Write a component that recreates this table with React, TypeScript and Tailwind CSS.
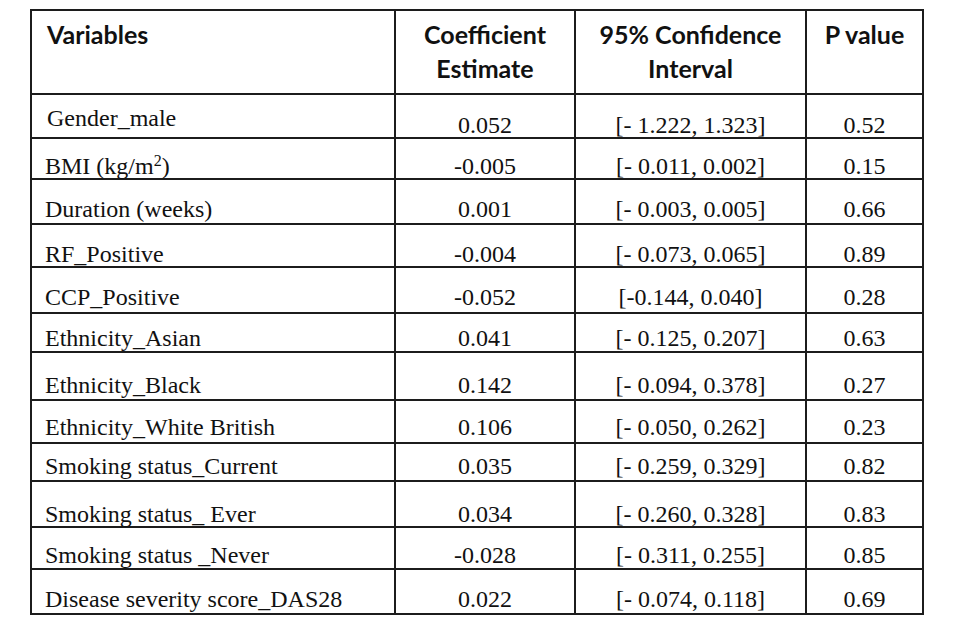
import React from 'react';

type Row = {
    name: React.ReactNode;
    coef: string;
    ci: string;
    p: string;
    h: string;
    pb: string;
    namePb?: string;
};

const rows: Row[] = [
    { name: "Gender_male", coef: "0.052", ci: "[- 1.222, 1.323]", p: "0.52", h: "h-[44px]", pb: "pb-0", namePb: "pb-[7px] pl-[15px]" },
    { name: <>BMI (kg/m<sup className="text-[16px] relative -top-[8px]">2</sup>)</>, coef: "-0.005", ci: "[- 0.011, 0.002]", p: "0.15", h: "h-[41px]", pb: "pb-0" },
    { name: "Duration (weeks)", coef: "0.001", ci: "[- 0.003, 0.005]", p: "0.66", h: "h-[45px]", pb: "pb-[2px]" },
    { name: "RF_Positive", coef: "-0.004", ci: "[- 0.073, 0.065]", p: "0.89", h: "h-[43px]", pb: "pb-0" },
    { name: "CCP_Positive", coef: "-0.052", ci: "[-0.144, 0.040]", p: "0.28", h: "h-[46px]", pb: "pb-[3px]" },
    { name: "Ethnicity_Asian", coef: "0.041", ci: "[- 0.125, 0.207]", p: "0.63", h: "h-[39px]", pb: "pb-[1px]" },
    { name: "Ethnicity_Black", coef: "0.142", ci: "[- 0.094, 0.378]", p: "0.27", h: "h-[48px]", pb: "pb-[2px]" },
    { name: "Ethnicity_White British", coef: "0.106", ci: "[- 0.050, 0.262]", p: "0.23", h: "h-[43px]", pb: "pb-[3px]" },
    { name: "Smoking status_Current", coef: "0.035", ci: "[- 0.259, 0.329]", p: "0.82", h: "h-[38px]", pb: "pb-[2px]" },
    { name: "Smoking status_ Ever", coef: "0.034", ci: "[- 0.260, 0.328]", p: "0.83", h: "h-[46px]", pb: "pb-0" },
    { name: "Smoking status _Never", coef: "-0.028", ci: "[- 0.311, 0.255]", p: "0.85", h: "h-[42px]", pb: "pb-[1px]" },
    { name: "Disease severity score_DAS28", coef: "0.022", ci: "[- 0.074, 0.118]", p: "0.69", h: "h-[45px]", pb: "pb-[2px]" },
];

const serif = "font-['Liberation_Serif','Times_New_Roman',serif] text-[24px] leading-none text-[#111]";
const head = "font-['Lato','Open_Sans',sans-serif] font-bold text-[25px] leading-[34px] text-[#111] pt-[6px]";
const cell = "border-r-2 border-b-2 border-[#1c1c1c] flex items-end";

export default function App() {
    return (
        <div className="w-[967px] h-[634px] bg-white pt-[9px] pl-[30px]">
            <div className="w-[894px] border-t-2 border-l-2 border-[#1c1c1c] grid grid-cols-[364px_180px_231px_117px]">
                {/* header */}
                <div className={`h-[84px] border-r-2 border-b-2 border-[#1c1c1c] pl-[15px] ${head}`}>Variables</div>
                <div className={`h-[84px] border-r-2 border-b-2 border-[#1c1c1c] text-center ${head}`}>Coefficient<br />Estimate</div>
                <div className={`h-[84px] border-r-2 border-b-2 border-[#1c1c1c] text-center ${head}`}>95% Confidence<br />Interval</div>
                <div className={`h-[84px] border-r-2 border-b-2 border-[#1c1c1c] text-center ${head}`}>P value</div>

                {rows.map((r, i) => (
                    <React.Fragment key={i}>
                        <div className={`${cell} ${r.h} ${r.namePb ?? `${r.pb} pl-[13px]`} ${serif}`}>
                            <span>{r.name}</span>
                        </div>
                        <div className={`${cell} ${r.h} ${r.pb} justify-center ${serif}`}>{r.coef}</div>
                        <div className={`${cell} ${r.h} ${r.pb} justify-center ${serif}`}>{r.ci}</div>
                        <div className={`${cell} ${r.h} ${r.pb} justify-center ${serif}`}>{r.p}</div>
                    </React.Fragment>
                ))}
            </div>
        </div>
    );
}
